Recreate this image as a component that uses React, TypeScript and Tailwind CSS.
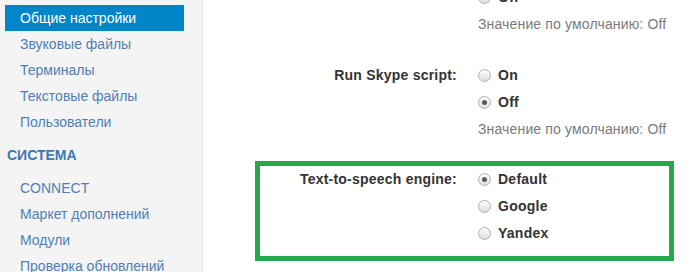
const groups = [
  { items: ['Общие настройки', 'Звуковые файлы', 'Терминалы', 'Текстовые файлы', 'Пользователи'] },
  { title: 'СИСТЕМА', items: ['CONNECT', 'Маркет дополнений', 'Модули', 'Проверка обновлений'] },
]

const Radio = ({ checked }: { checked?: boolean }) => (
  <span className="flex h-[13px] w-[13px] shrink-0 items-center justify-center rounded-full border border-[#b0b0b0] bg-gradient-to-b from-white to-[#dedede]">
    {checked && <span className="h-[5px] w-[5px] rounded-full bg-[#5a5a5a]" />}
  </span>
)

const Option = ({ label, checked }: { label: string; checked?: boolean }) => (
  <div className="flex h-[27px] items-center gap-[7px]">
    <Radio checked={checked} />
    <span className="font-bold tracking-[0.25px] text-[#333]">{label}</span>
  </div>
)

const Hint = () => (
  <div className="h-[26px] leading-[26px] tracking-[0.15px] text-[#7a7a7a]">Значение по умолчанию: Off</div>
)

const Field = ({
  label,
  labelWidth,
  children,
}: {
  label?: string
  labelWidth: string
  children: React.ReactNode
}) => (
  <div className="flex">
    <div className={`${labelWidth} shrink-0 pt-[3px] text-right font-bold tracking-[0.22px] text-[#333]`}>
      {label}
    </div>
    <div className="ml-[21px]">{children}</div>
  </div>
)

export default function App() {
  return (
    <div className="flex h-[272px] w-[699px] overflow-hidden bg-white text-[14px] [font-family:'Liberation_Sans',Arial,sans-serif]">
      <aside className="w-[203px] shrink-0 border-r border-[#e2e2e2] bg-[#f4f4f4] pt-[5px]">
        {groups.map((g, gi) => (
          <div key={gi}>
            {g.title && (
              <div className="flex h-[40px] items-center pl-[7px] font-bold text-[#3a78b6]">{g.title}</div>
            )}
            {g.items.map((item, i) => {
              const active = gi === 0 && i === 0
              return (
                <div
                  key={item}
                  className={
                    active
                      ? 'ml-[5px] flex h-[26px] w-[179px] items-center bg-[#0086c8] pl-[15px] text-white'
                      : 'ml-[5px] flex h-[26px] w-[179px] items-center pl-[15px] text-[#4f7fb5]'
                  }
                >
                  {item}
                </div>
              )
            })}
          </div>
        ))}
      </aside>

      <main className="flex-1">
        <div className="mt-[-16px]">
          <Field labelWidth="w-[254px]">
            <Option label="Off" checked />
            <Hint />
          </Field>
        </div>

        <div className="mt-[25px]">
          <Field label="Run Skype script:" labelWidth="w-[254px]">
            <Option label="On" />
            <Option label="Off" checked />
            <Hint />
          </Field>
        </div>

        <div className="ml-[52px] mt-[19px] w-[419px] border-[5px] border-[#25a94c] pb-[9px]">
          <Field label="Text-to-speech engine:" labelWidth="w-[197px]">
            <Option label="Default" checked />
            <Option label="Google" />
            <Option label="Yandex" />
          </Field>
        </div>
      </main>
    </div>
  )
}
